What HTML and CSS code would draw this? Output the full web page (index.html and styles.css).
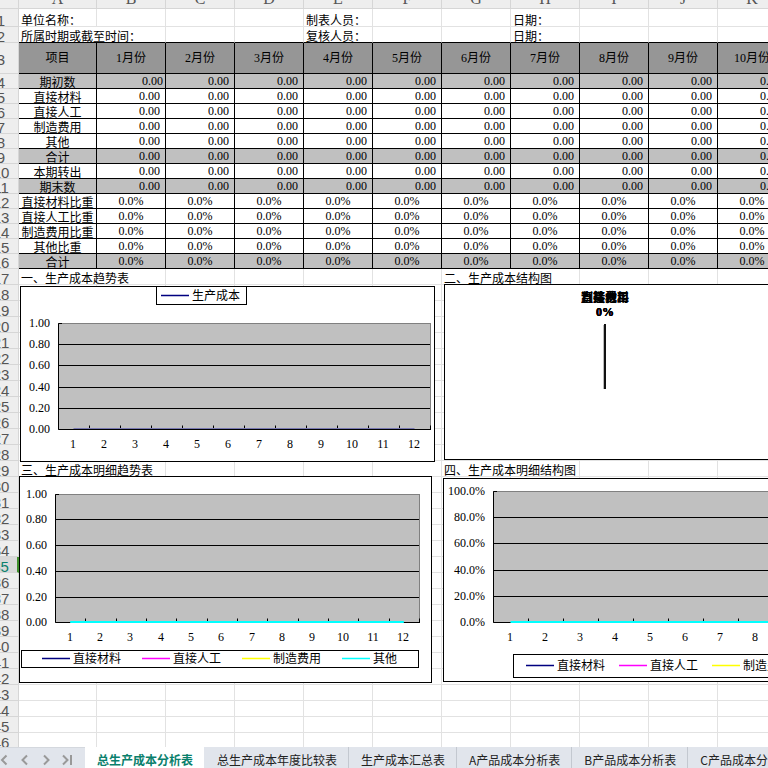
FILE: index.html
```html
<!DOCTYPE html>
<html lang="zh-CN">
<head>
<meta charset="utf-8">
<title>总生产成本分析表</title>
<link rel="stylesheet" href="styles.css">
</head>
<body>
<main class="sheet">
  <table class="grid">
    <colgroup id="cols"></colgroup>
    <thead id="head"></thead>
    <tbody id="rows"></tbody>
  </table>
  <svg class="chart chart-trend" id="trend" role="img" aria-label="生产成本趋势表"></svg>
  <svg class="chart chart-pie" id="pie" role="img" aria-label="生产成本结构图"></svg>
  <svg class="chart chart-detail" id="detail" role="img" aria-label="生产成本明细趋势表"></svg>
  <svg class="chart chart-share" id="share" role="img" aria-label="生产成本明细结构图"></svg>
</main>
<footer class="tabbar">
  <div class="arrows">
    <button type="button" aria-label="第一张"><svg viewBox="0 0 10 12"><path d="M7.5 1.5 3 6l4.500 4.500"/></svg></button>
    <button type="button" aria-label="上一张"><svg viewBox="0 0 10 12"><path d="M7 1.500 2.500 6 7 10.500"/></svg></button>
    <button type="button" aria-label="下一张"><svg viewBox="0 0 10 12"><path d="M3 1.500 7.500 6 3 10.500"/></svg></button>
    <button type="button" aria-label="最后一张"><svg viewBox="0 0 10 12"><path d="M1 1.500 5.500 6 1 10.500M9 1v10"/></svg></button>
  </div>
  <nav class="tabs">
    <button type="button" class="tab active">总生产成本分析表</button>
    <button type="button" class="tab">总生产成本年度比较表</button>
    <button type="button" class="tab">生产成本汇总表</button>
    <button type="button" class="tab">A产品成本分析表</button>
    <button type="button" class="tab">B产品成本分析表</button>
    <button type="button" class="tab">C产品成本分析表</button>
  </nav>
</footer>
<script src="app.js"></script>
</body>
</html>
```
FILE: styles.css
```css
* { box-sizing: border-box; }

body {
  margin: 0;
  height: 100vh;
  display: flex;
  flex-direction: column;
  overflow: hidden;
  background: #fff;
  color: #000;
  font: 12px/14px "Liberation Serif", "Noto Sans CJK SC", serif;
}

.sheet {
  position: relative;
  flex: 1;
  min-height: 0;
  overflow: hidden;
}

/* The grid is scrolled slightly, so its headings start outside the view. */
.grid {
  width: 941px;
  margin: -11px 0 0 -16px;
  table-layout: fixed;
  border-collapse: separate;
  border-spacing: 0;
}
.col-head { width: 35px; }
.col-label { width: 78px; }
.col-data { width: 69px; }

.grid tr { height: 16px; }
.grid .row-letters { height: 20px; }
.grid .row-first { height: 18px; }
.grid .row-months { height: 31px; }
.grid .row-data { height: 15px; }

.grid th,
.grid td {
  padding: 0;
  font-weight: normal;
  white-space: nowrap;
  border-right: 1px solid #e2e2e2;
  border-bottom: 1px solid #e2e2e2;
}
.grid thead th {
  background: #eee;
  color: #555;
  font-size: 16px;
  line-height: 18px;
  border-color: #d6d6d6;
}
.grid tbody th {
  background: #eee;
  color: #555;
  font-family: "Liberation Sans", sans-serif;
  font-size: 15px;
  vertical-align: bottom;
  border-color: #d6d6d6;
}
.grid .row-months th { vertical-align: middle; }
.grid tbody th.current {
  background: #d9d9d9;
  color: #0a806c;
  border-right: 2px solid #3f8f2c;
}
.num,
.txt { display: block; height: 14px; line-height: 18px; }

.grid .text { vertical-align: bottom; padding-left: 2px; }
.grid .row-second td,
.grid .row-months td,
.grid .row-data td { border-bottom-color: #000; }
.grid .row-months td,
.grid .row-data td { border-right-color: #000; text-align: center; }
.grid .row-months td { background: #969696; }
.grid .row-data.shaded td { background: #c0c0c0; }
.grid .row-data .amount { text-align: right; padding-right: 5px; }
.grid .row-data .opening { padding-right: 2px; }

.chart { position: absolute; background: #fff; font-size: 12px; }
.chart-trend { left: 20px; top: 286px; width: 415px; height: 176px; }
.chart-pie { left: 444px; top: 284px; width: 480px; height: 176px; }
.chart-detail { left: 19px; top: 476px; width: 413px; height: 207px; }
.chart-share { left: 443px; top: 478px; width: 480px; height: 204px; }

.frame { fill: #fff; stroke: #000; }
.plot { fill: #c0c0c0; stroke: #808080; }
.axis { fill: none; stroke: #000; }
.end { text-anchor: end; }
.mid { text-anchor: middle; }
.strong { font-weight: bold; }
.needle { fill: #111; }
.needle-edge { fill: #bbb; }

.tabbar {
  display: flex;
  height: 21px;
  overflow: hidden;
  background: #e1e5ec;
  font-family: "Noto Sans CJK SC", sans-serif;
}
.tabbar button {
  border: 0;
  background: none;
  font: inherit;
  line-height: 26px;
  height: 26px;
  color: #222;
}
.arrows {
  flex: none;
  display: flex;
  width: 86px;
  gap: 11px;
  margin-left: -1px;
  border-top: 1px solid #d4d8de;
}
.tabbar .arrows button { flex: none; width: 10px; height: 24px; padding: 0; }
.arrows svg {
  display: block;
  width: 10px;
  height: 12px;
  fill: none;
  stroke: #999;
  stroke-width: 2;
}
.tabs { display: flex; }
.tabs .tab {
  flex: none;
  padding: 0 11px 0 12px;
  border-right: 1px solid #c3c8d0;
}
.tabs .active {
  background: #fff;
  color: #0a806c;
  font-weight: bold;
  border-color: #e1e5ec;
}
```
FILE: app.js
```js
const COLUMNS = 'ABCDEFGHIJKLM'.split('');
const MONTHS = 12;
const LAST_ROW = 46;
const CURRENT_ROW = 35;

const items = {
  4: ['期初数', 'amount', true],
  5: ['直接材料', 'amount'],
  6: ['直接人工', 'amount'],
  7: ['制造费用', 'amount'],
  8: ['其他', 'amount'],
  9: ['合计', 'amount', true],
  10: ['本期转出', 'amount'],
  11: ['期末数', 'amount', true],
  12: ['直接材料比重', 'ratio'],
  13: ['直接人工比重', 'ratio'],
  14: ['制造费用比重', 'ratio'],
  15: ['其他比重', 'ratio'],
  16: ['合计', 'ratio', true]
};

// Free text in cells: row -> column -> [text, columns covered]
const notes = {
  1: { 0: ['单位名称：', 1], 4: ['制表人员：', 1], 7: ['日期：', 1] },
  2: { 0: ['所属时期或截至时间：', 2], 4: ['复核人员：', 1], 7: ['日期：', 1] },
  17: { 0: ['一、生产成本趋势表', 2], 6: ['二、生产成本结构图', 2] },
  29: { 0: ['三、生产成本明细趋势表', 2], 6: ['四、生产成本明细结构图', 2] }
};

document.getElementById('cols').innerHTML =
  '<col class="col-head"><col class="col-label">' + '<col class="col-data">'.repeat(MONTHS);
document.getElementById('head').innerHTML =
  '<tr class="row-letters"><th></th>' + COLUMNS.map(c => `<th>${c}</th>`).join('') + '</tr>';

function cellsOf(row) {
  if (row === 3) {
    let out = '<td>项目</td>';
    for (let m = 1; m <= MONTHS; m++) out += `<td>${m}月份</td>`;
    return out;
  }
  if (items[row]) {
    const [label, kind] = items[row];
    let out = `<td><span class="txt">${label}</span></td>`;
    for (let m = 1; m <= MONTHS; m++) {
      const opening = row === 4 && m === 1 ? ' opening' : '';
      out += `<td class="${kind}${opening}">${kind === 'amount' ? '0.00' : '0.0%'}</td>`;
    }
    return out;
  }
  let out = '';
  for (let c = 0; c < COLUMNS.length; c++) {
    const note = notes[row] && notes[row][c];
    if (note) {
      out += `<td class="text" colspan="${note[1]}"><span class="txt">${note[0]}</span></td>`;
      c += note[1] - 1;
    } else out += '<td></td>';
  }
  return out;
}

let body = '';
for (let r = 1; r <= LAST_ROW; r++) {
  const names = { 1: 'row-first', 2: 'row-second', 3: 'row-months' };
  const cls = items[r] ? 'row-data' + (items[r][2] ? ' shaded' : '') : names[r] || '';
  const current = r === CURRENT_ROW ? ' class="current"' : '';
  body += `<tr class="${cls}"><th${current}><span class="num">${r}</span></th>${cellsOf(r)}</tr>`;
}
document.getElementById('rows').innerHTML = body;

const rect = (cls, x, y, w, h) =>
  `<rect class="${cls}" x="${x + 0.5}" y="${y + 0.5}" width="${w}" height="${h}"/>`;
const text = (cls, x, y, s) => `<text class="${cls}" x="${x}" y="${y}">${s}</text>`;

function lineChart(id, o) {
  const { left, top, width, height, step, grid } = o;
  const bottom = top + height;
  let s = rect('frame', 0, 0, o.w - 1, o.h - 1) + rect('plot', left, top, width, height);
  let d = `M${left + 4} ${top + 0.5}H${left + 0.5}V${bottom + 0.5}H${left + width + 1}`;
  grid.forEach(y => { d += `M${left} ${y + 0.5}h${width}`; });
  for (let i = 1; i <= 12; i++) {
    d += `M${Math.round(left + i * step) + 0.5} ${bottom + 0.5}v-4`;
    s += text('mid', Math.round(left + (i - 0.5) * step - 0.5), bottom + 19, i);
  }
  s += `<path class="axis" d="${d}"/>`;
  [top, ...grid, bottom].forEach((y, i) => { s += text('end', left - 8, y + 4, o.labels[i]); });
  const x1 = left + step / 2;
  s += `<path d="M${x1} ${bottom + o.lineShift}H${x1 + 11 * step}" stroke="${o.line}" stroke-width="${o.lineWidth}"/>`;
  const g = o.legend;
  s += rect('frame', g.x, g.y, g.w, g.h);
  g.entries.forEach(([name, color], i) => {
    const x = g.first + i * g.step;
    const y = g.y + g.mid;
    s += `<path d="M${x} ${y}h28" stroke="${color}" stroke-width="3" opacity=".25"/>`;
    s += `<path d="M${x} ${y}h28" stroke="${color}"/>`;
    s += text('', x + 31, y + 4, name);
  });
  document.getElementById(id).innerHTML = s;
}

const series = [['直接材料', '#000080'], ['直接人工', '#f0f'], ['制造费用', '#ff0'], ['其他', '#0ff']];
const amounts = ['1.00', '0.80', '0.60', '0.40', '0.20', '0.00'];
const percents = ['100.0%', '80.0%', '60.0%', '40.0%', '20.0%', '0.0%'];

lineChart('trend', {
  w: 415, h: 176, left: 38, top: 37, width: 372, height: 106, step: 31,
  grid: [58, 79, 101, 122], labels: amounts, line: '#7777b0', lineWidth: 1, lineShift: -0.5,
  legend: { x: 136, y: 0, w: 90, h: 18, mid: 9.5, first: 141, step: 0, entries: [['生产成本', '#000080']] }
});
lineChart('detail', {
  w: 413, h: 207, left: 36, top: 18, width: 364, height: 128, step: 364 / 12,
  grid: [43, 69, 95, 121], labels: amounts, line: '#0ff', lineWidth: 2, lineShift: 0,
  legend: { x: 2, y: 174, w: 397, h: 17, mid: 8.5, first: 23, step: 100, entries: series }
});
lineChart('share', {
  w: 480, h: 204, left: 50, top: 13, width: 420, height: 131, step: 35,
  grid: [39, 65, 92, 118], labels: percents, line: '#0ff', lineWidth: 2, lineShift: 0,
  legend: { x: 70, y: 176, w: 386, h: 23, mid: 11.5, first: 83, step: 93, entries: series }
});

// Every slice is zero, so the four labels fall on one spot.
document.getElementById('pie').innerHTML =
  rect('frame', 0, 0, 479, 175) +
  series.map(([name]) => text('mid strong', 161, 18, name) + text('mid strong', 161, 32, '0%')).join('') +
  '<rect class="needle-edge" x="159" y="41" width="1" height="64"/>' +
  '<rect class="needle" x="160" y="40" width="2" height="65"/>';
```
